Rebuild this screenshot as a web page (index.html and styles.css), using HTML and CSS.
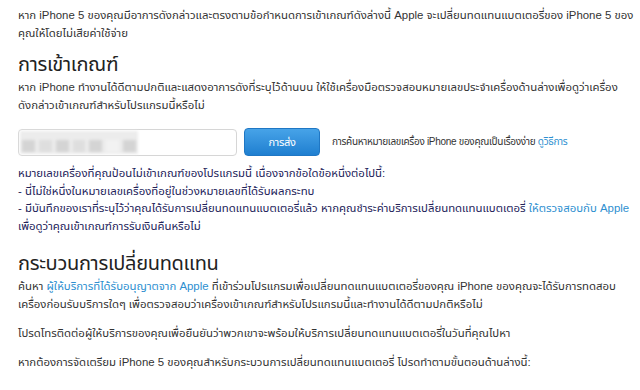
FILE: index.html
```html
<!DOCTYPE html>
<html lang="th">
<head>
  <meta charset="UTF-8">
  <meta name="viewport" content="width=device-width, initial-scale=1.0">
  <title>โปรแกรมเปลี่ยนแบตเตอรี่ iPhone 5</title>
  <link rel="stylesheet" href="styles.css">
</head>
<body>
  <p class="intro">หาก iPhone 5 ของคุณมีอาการดังกล่าวและตรงตามข้อกำหนดการเข้าเกณฑ์ดังล่างนี้ Apple จะเปลี่ยนทดแทนแบตเตอรี่ของ iPhone 5 ของคุณให้โดยไม่เสียค่าใช้จ่าย</p>

  <h2>การเข้าเกณฑ์</h2>
  <p>หาก iPhone ทำงานได้ดีตามปกติและแสดงอาการดังที่ระบุไว้ด้านบน ให้ใช้เครื่องมือตรวจสอบหมายเลขประจำเครื่องด้านล่างเพื่อดูว่าเครื่อง<span class="nowrap">ดังกล่าว</span>เข้าเกณฑ์สำหรับโปรแกรมนี้หรือไม่</p>

  <div class="check-row">
    <div class="serial-input">
      <div class="blur">
        <span></span><span class="light"></span><span></span><span class="light"></span><span></span><span class="pale"></span><span></span>
      </div>
    </div>
    <button class="submit-btn">การส่ง</button>
    <span class="hint">การค้นหาหมายเลขเครื่อง iPhone ของคุณเป็นเรื่องง่าย <a href="#">ดูวิธีการ</a></span>
  </div>

  <div class="error">
    หมายเลขเครื่องที่คุณป้อนไม่เข้าเกณฑ์ของโปรแกรมนี้ เนื่องจากข้อใดข้อหนึ่งต่อไปนี้:<br>
    - นี่ไม่ใช่หนึ่งในหมายเลขเครื่องที่อยู่ในช่วงหมายเลขที่ได้รับผลกระทบ<br>
    - มีบันทึกของเราที่ระบุไว้ว่าคุณได้รับการเปลี่ยนทดแทนแบตเตอรี่แล้ว หากคุณชำระค่าบริการเปลี่ยนทดแทนแบตเตอรี่ <a href="#">ให้ตรวจสอบกับ Apple</a> เพื่อดูว่าคุณเข้าเกณฑ์การรับเงินคืนหรือไม่
  </div>

  <h2>กระบวนการเปลี่ยนทดแทน</h2>
  <p>ค้นหา <a href="#">ผู้ให้บริการที่ได้รับอนุญาตจาก Apple</a> ที่เข้าร่วมโปรแกรมเพื่อเปลี่ยนทดแทนแบตเตอรี่ของคุณ iPhone ของคุณจะได้รับการทดสอบเครื่องก่อนรับบริการใดๆ เพื่อตรวจสอบว่าเครื่องเข้าเกณฑ์สำหรับโปรแกรมนี้และทำงานได้ดีตามปกติหรือไม่</p>
  <p class="spaced">โปรดโทรติดต่อผู้ให้บริการของคุณเพื่อยืนยันว่าพวกเขาจะพร้อมให้บริการเปลี่ยนทดแทนแบตเตอรี่ในวันที่คุณไปหา</p>
  <p class="spaced">หากต้องการจัดเตรียม iPhone 5 ของคุณสำหรับกระบวนการเปลี่ยนทดแทนแบตเตอรี่ โปรดทำตามขั้นตอนด้านล่างนี้:</p>
</body>
</html>
```

FILE: styles.css
```css
body {
  margin: 0;
  padding: 6px 5px 0 18px;
  font-family: "Liberation Sans", "Noto Sans Thai", "Noto Sans", sans-serif;
  font-size: 11.4px;
  line-height: 18px;
  color: #333;
  background: #fff;
}
p {
  margin: 0;
}
a {
  color: #2e8fd0;
  text-decoration: none;
}
.nowrap {
  white-space: nowrap;
}
h2 {
  margin: 10px 0 2px;
  font-family: "Noto Sans", "Noto Sans Thai", sans-serif;
  font-size: 20px;
  letter-spacing: -0.3px;
  line-height: 24px;
  font-weight: normal;
  color: #222;
}
.check-row {
  display: flex;
  align-items: center;
  margin-top: 14px;
}
.serial-input {
  width: 216px;
  height: 25px;
  border: 1px solid #d6d6d6;
  border-radius: 4px;
  background: #fff;
  display: flex;
  align-items: center;
  padding-left: 1px;
}
.blur {
  display: flex;
  width: 118px;
  height: 23px;
  background: #ececec;
  filter: blur(1.5px);
}
.blur span {
  flex: 1;
  margin: 9px 2px 2px;
  background: #d4d4d4;
}
.blur span.light {
  background: #dedede;
}
.blur span.pale {
  background: #f2f2f2;
}
.submit-btn {
  margin-left: 7px;
  width: 76px;
  height: 28px;
  border: 1px solid #1f77c4;
  border-radius: 4px;
  background: linear-gradient(#47a3e8, #1f7fd0);
  color: #fff;
  font-family: inherit;
  font-size: 11px;
  letter-spacing: -0.3px;
}
.hint {
  margin-left: 12px;
  font-size: 10px;
  letter-spacing: -0.3px;
}
.error {
  margin-top: 9px;
  color: #23235a;
  line-height: 17.5px;
}
.error + h2 {
  margin-top: 16px;
}
.spaced {
  margin-top: 11px;
}
```
